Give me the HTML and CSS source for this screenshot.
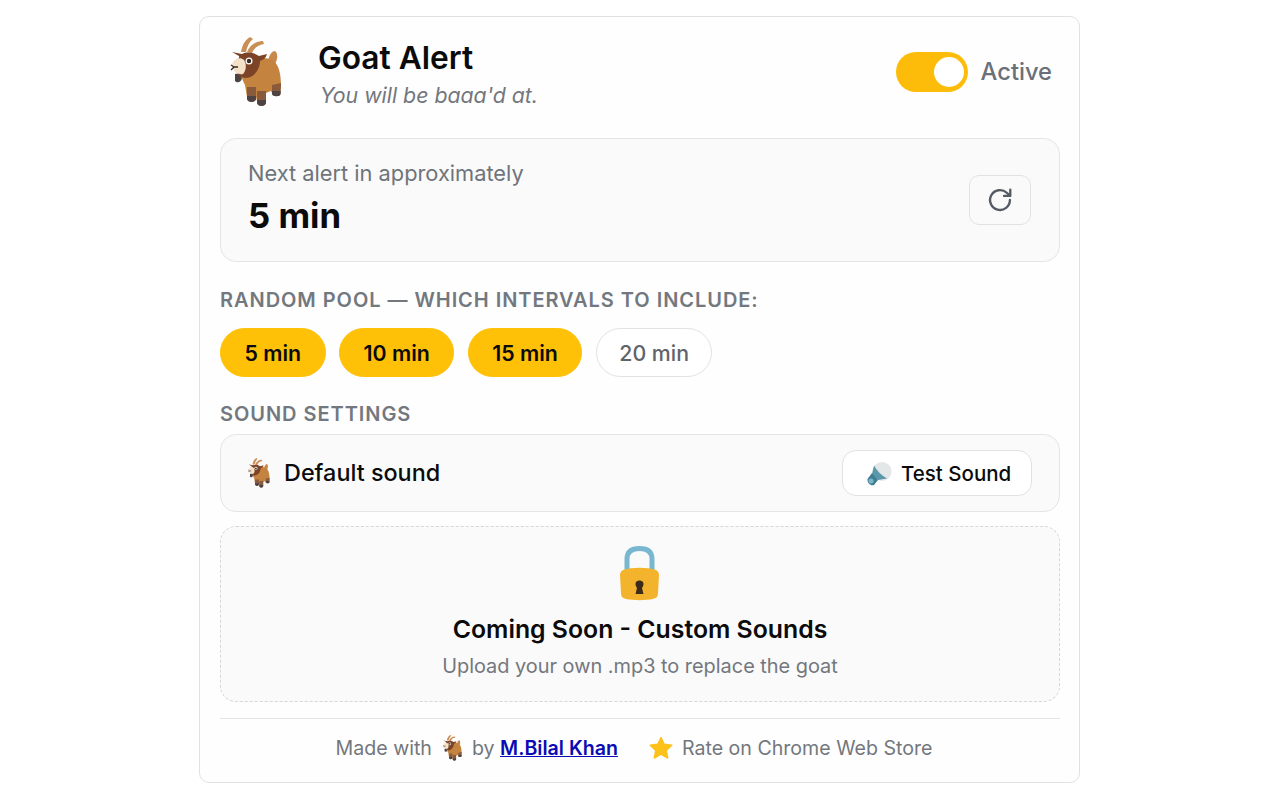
FILE: index.html
```html
<!DOCTYPE html>
<html lang="en">
<head>
    <meta charset="UTF-8">
    <title>Goat Alert</title>
    <link rel="stylesheet" href="styles.css">
</head>
<body>

<svg class="defs" width="0" height="0">
    <symbol id="goat" viewBox="0 0 54 70">
        <path d="M13 15 C14 8 17 3 22 0 L25 2 C21 5 19 10 18 15Z" fill="#c98f55"/>
        <path d="M19 15 C21 9 27 4 35 4 L36 7 C30 8 26 11 24 16Z" fill="#c98f55"/>
        <path d="M40 24 C41 18 44 14 47 14 C50 16 50 22 47 27Z" fill="#c8894c"/>
        <path d="M19 24 C28 20 42 20 47 25 C52 31 53 40 53 50 L52 56 L44 56 L43 54 L38 56 L38 64 L29 64 L28 60 L19 60 L17 48 C12 40 12 30 19 24Z" fill="#c4843f"/>
        <path d="M44 48 L53 46 L52.500 57 C52 60 45 60 44 57Z" fill="#8a5a3c"/>
        <path d="M19 50 L28 50 L28 62 C27 66 20 66 19 62Z" fill="#8a5a3c"/>
        <path d="M29 54 L38 54 L38 66 C37 70 30 70 29 66Z" fill="#8a5a3c"/>
        <path d="M44 54 L52.700 54 L52.500 57 C52 60 45 60 44 57Z" fill="#4d4343"/>
        <path d="M19 59 L28 59 L28 62 C27 66 20 66 19 62Z" fill="#4d4343"/>
        <path d="M29 63 L38 63 L38 66 C37 70 30 70 29 66Z" fill="#4d4343"/>
        <path d="M7 37 C10 36 13 38 14 41 C13 46 9 46 7 44Z" fill="#4d4343"/>
        <path d="M4 15 L14 17 C20 14 27 16 31 19 L39 17 C38 21 35 23 32 24 C32 32 26 41 18 41 C12 41 9 37 8 32 L7 26 C9 24 12 20 11 19Z" fill="#7d4326"/>
        <path d="M4 28 C5 22 12 19 16 23 C19 27 18 34 15 37 C10 38 5 35 4 28Z" fill="#f3e1c8"/>
        <circle cx="21" cy="24" r="3.500" fill="#fff"/>
        <circle cx="21" cy="24" r="2.200" fill="#3a2a22"/>
        <path d="M3 28 L6 30 L3 33 M6 30 L10 30" fill="none" stroke="#3a2a22" stroke-width="1.300"/>
    </symbol>
    <symbol id="star" viewBox="0 0 24 24">
        <path d="M12 1.500 L15.200 8.300 L22.800 9.200 L17.200 14.400 L18.700 22 L12 18.200 L5.300 22 L6.800 14.400 L1.200 9.200 L8.800 8.300Z" fill="#fcc21b" stroke="#fcc21b" stroke-width="1.500" stroke-linejoin="round"/>
    </symbol>
</svg>

<main class="card">
    <header class="top">
        <svg class="logo"><use href="#goat"/></svg>
        <div class="title-wrap">
            <h1>Goat Alert</h1>
            <p class="tagline">You will be baaa'd at.</p>
        </div>
        <div class="status">
            <span class="switch"><span class="knob"></span></span>
            <span class="status-text">Active</span>
        </div>
    </header>

    <section class="timer">
        <div class="timer-text">
            <div class="timer-label">Next alert in approximately</div>
            <div class="timer-value">5 min</div>
        </div>
        <button class="refresh" type="button" aria-label="Refresh">
            <svg width="28" height="28" viewBox="0 0 24 24" fill="none" stroke="#555b63" stroke-width="2" stroke-linecap="round" stroke-linejoin="round">
                <path d="M20.500 12 A8.500 8.500 0 1 1 17.800 5.800 L20.500 8.300"/>
                <path d="M20.800 3.200 V8.500 H15.500"/>
            </svg>
        </button>
    </section>

    <h2 class="label">RANDOM POOL — WHICH INTERVALS TO INCLUDE:</h2>
    <div class="pills">
        <span class="pill on">5 min</span>
        <span class="pill on">10 min</span>
        <span class="pill on">15 min</span>
        <span class="pill">20 min</span>
    </div>

    <h2 class="label">SOUND SETTINGS</h2>
    <section class="sound">
        <div class="sound-name">
            <svg class="goat-small"><use href="#goat"/></svg>
            <span>Default sound</span>
        </div>
        <button class="test" type="button">
            <svg width="28" height="28" viewBox="0 0 28 28">
                <circle cx="17" cy="12.500" r="9.500" fill="#e3e7e8"/>
                <path d="M9 6.500 C12 12 16 16 22 19.500 L13 21 L7 15Z" fill="#5c98ab"/>
                <path d="M7 14 L13 21 L9 26 C6 27.500 2 24 2.500 20Z" fill="#3f7f96"/>
                <circle cx="6" cy="22" r="2.500" fill="#7fb6c6"/>
            </svg>
            <span>Test Sound</span>
        </button>
    </section>

    <section class="soon">
        <svg class="lock" width="40" height="56" viewBox="0 0 40 56">
            <path d="M7 26 V14 C7 6 12 3.500 19.500 3.500 C27 3.500 32 6 32 14 V26" fill="none" stroke="#79b6d0" stroke-width="5"/>
            <path d="M3 25 C12 22 27 22 36 25 C38 26 39 28 39 30 L38 48 C38 52 36 53 33 54 C25 55.500 14 55.500 6 54 C3 53 1 52 1 48 L0 30 C0 28 1 26 3 25Z" fill="#f4b32c"/>
            <path d="M19.500 35.500 C22 35.500 23.500 37 23.500 39 C23.500 41 22.500 42 22 43 L23.500 49 L15.500 49 L17 43 C16.500 42 15.500 41 15.500 39 C15.500 37 17 35.500 19.500 35.500Z" fill="#3c2a1a"/>
        </svg>
        <div class="soon-title">Coming Soon - Custom Sounds</div>
        <div class="soon-sub">Upload your own .mp3 to replace the goat</div>
    </section>

    <footer class="foot">
        <span class="foot-group">
            Made with
            <svg class="goat-tiny"><use href="#goat"/></svg>
            <span class="by">by <a href="#">M.Bilal Khan</a></span>
        </span>
        <span class="foot-group">
            <svg class="star"><use href="#star"/></svg>
            Rate on Chrome Web Store
        </span>
    </footer>
</main>

</body>
</html>
```

FILE: styles.css
```css
* {
  box-sizing: border-box;
}
body {
  margin: 0;
  height: 800px;
  overflow: hidden;
  background: #fff;
  padding: 16px 199px 0 199px;
  font-family: Inter, "Liberation Sans", sans-serif;
  color: #0b0b0c;
}
.defs {
  position: absolute;
}
.card {
  width: 881px;
  height: 767px;
  border: 1px solid #dfe1e3;
  border-radius: 10px;
  padding: 0 19px 0 20px;
  background: #fefefe;
}
.top {
  display: flex;
  align-items: center;
  height: 121px;
  padding-bottom: 8px;
}
.logo {
  width: 54px;
  height: 70px;
  margin: 0 0 4px 8px;
}
.title-wrap {
  margin-left: 36px;
  flex: 1;
}
h1 {
  margin: 0;
  font-size: 31.7px;
  font-weight: 600;
  line-height: 38px;
}
.tagline {
  margin: 5px 0 0 2px;
  font-size: 21.3px;
  font-style: italic;
  color: #73777d;
  line-height: 26px;
}
.status {
  display: flex;
  align-items: center;
  gap: 13px;
  margin: -4px 8px 0 0;
}
.switch {
  display: flex;
  justify-content: flex-end;
  align-items: center;
  width: 72px;
  height: 40px;
  padding-right: 4px;
  border-radius: 20px;
  background: #fdbb0a;
}
.knob {
  width: 30px;
  height: 30px;
  border-radius: 50%;
  background: #fff;
}
.status-text {
  font-size: 23.7px;
  font-weight: 500;
  color: #6b7078;
}
.timer {
  display: flex;
  justify-content: space-between;
  align-items: center;
  height: 124px;
  padding: 0 28px 0 27px;
  border: 1px solid #e3e5e7;
  border-radius: 16px;
  background: #fafafa;
}
.timer-text {
  padding-bottom: 5px;
}
.timer-label {
  font-size: 21.8px;
  color: #6f747a;
  line-height: 28px;
}
.timer-value {
  margin-top: 7px;
  font-size: 34.7px;
  font-weight: 700;
  line-height: 42px;
}
.refresh {
  display: flex;
  align-items: center;
  justify-content: center;
  width: 62px;
  height: 50px;
  padding: 0;
  border: 1px solid #e0e2e4;
  border-radius: 10px;
  background: #fafafa;
}
.label {
  margin: 0;
  font-size: 20px;
  font-weight: 600;
  letter-spacing: 0.95px;
  line-height: 24px;
  color: #73787f;
}
.timer + .label {
  margin-top: 26px;
}
.pills {
  display: flex;
  gap: 13.5px;
  margin: 16px 0 25px;
}
.pill {
  display: flex;
  align-items: center;
  height: 49px;
  padding: 0 22.5px;
  border: 1px solid #e0e2e4;
  border-radius: 25px;
  font-size: 21.3px;
  font-weight: 500;
  color: #5f646b;
  background: #fff;
}
.pill.on {
  padding: 0 23.5px;
  border-color: #ffc107;
  background: #ffc107;
  font-weight: 600;
  color: #0b0b0c;
}
.sound {
  display: flex;
  justify-content: space-between;
  align-items: center;
  height: 78px;
  margin-top: 8px;
  padding: 0 27px 0 26px;
  border: 1px solid #e3e5e7;
  border-radius: 16px;
  background: #fafafa;
}
.sound-name {
  display: flex;
  align-items: center;
  gap: 14px;
  padding-bottom: 1px;
  font-size: 23.4px;
  font-weight: 500;
}
.goat-small {
  width: 23px;
  height: 30px;
}
.test {
  display: flex;
  align-items: center;
  gap: 8px;
  height: 46px;
  width: 190px;
  padding: 0 0 0 22px;
  border: 1px solid #e0e2e4;
  border-radius: 14px;
  background: #fff;
  font-family: inherit;
  font-size: 20.5px;
  font-weight: 500;
  color: #0b0b0c;
}
.soon {
  display: flex;
  flex-direction: column;
  align-items: center;
  height: 176px;
  margin-top: 14px;
  padding-top: 18px;
  border: 1px dashed #d5d7da;
  border-radius: 16px;
  background: #fafafa;
}
.soon-title {
  margin-top: 12px;
  font-size: 24.8px;
  font-weight: 600;
  line-height: 32px;
}
.soon-sub {
  margin-top: 9px;
  font-size: 19.9px;
  color: #73777d;
  line-height: 24px;
}
.foot {
  display: flex;
  justify-content: center;
  align-items: center;
  gap: 31px;
  height: 58px;
  margin-top: 16px;
  padding-right: 12px;
  border-top: 1px solid #e3e5e7;
  font-size: 19.6px;
  color: #73777d;
}
.foot-group {
  display: flex;
  align-items: center;
  gap: 9px;
}
.foot-group a {
  color: #0b0bb5;
  font-weight: 600;
}
.goat-tiny {
  width: 22px;
  height: 26px;
}
.star {
  width: 24px;
  height: 24px;
}
```
